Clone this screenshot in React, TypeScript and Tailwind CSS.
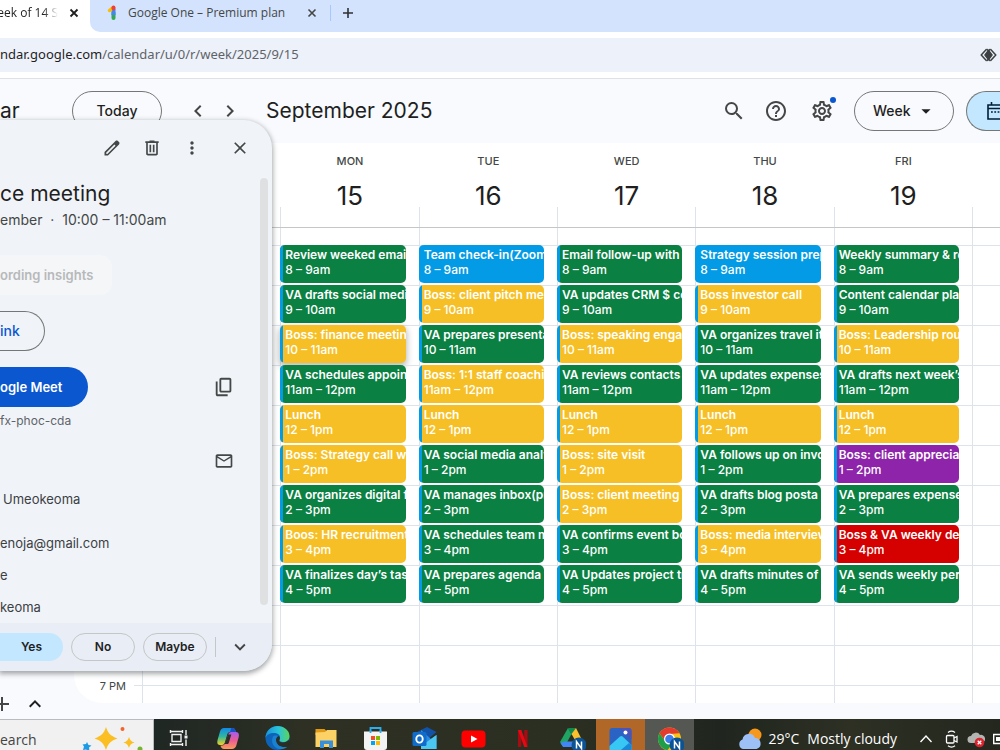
import type { ReactNode } from "react";
import {
  MdAdd,
  MdArrowDropDown,
  MdChevronLeft,
  MdChevronRight,
  MdClose,
  MdExpandLess,
  MdExpandMore,
  MdHelpOutline,
  MdMoreVert,
  MdOutlineSettings,
  MdSearch,
} from "react-icons/md";

type Tone = "green" | "yellow" | "blue" | "purple" | "red";
type CalendarEvent = { title: string; tone: Tone; open?: boolean };

const toneClass: Record<Tone, string> = {
  green: "bg-[#0b8043]",
  yellow: "bg-[#f6bf26]",
  blue: "bg-[#039be5]",
  purple: "bg-[#8e24aa]",
  red: "bg-[#d50000]",
};

const hours = [
  "8 – 9am",
  "9 – 10am",
  "10 – 11am",
  "11am – 12pm",
  "12 – 1pm",
  "1 – 2pm",
  "2 – 3pm",
  "3 – 4pm",
  "4 – 5pm",
];

const g = (title: string): CalendarEvent => ({ title, tone: "green" });
const y = (title: string): CalendarEvent => ({ title, tone: "yellow" });
const b = (title: string): CalendarEvent => ({ title, tone: "blue" });

const days: { name: string; date: string; events: CalendarEvent[] }[] = [
  { name: "", date: "", events: [] },
  {
    name: "MON",
    date: "15",
    events: [
      g("Review weeked email"),
      g("VA drafts social medi"),
      { title: "Boss: finance meetin", tone: "yellow", open: true },
      g("VA schedules appoin"),
      y("Lunch"),
      y("Boss: Strategy call wi"),
      g("VA organizes digital f"),
      y("Boos: HR recruitment"),
      g("VA finalizes day’s tas"),
    ],
  },
  {
    name: "TUE",
    date: "16",
    events: [
      b("Team check-in(Zoom"),
      y("Boss: client pitch me"),
      g("VA prepares presenta"),
      y("Boss: 1:1 staff coachi"),
      y("Lunch"),
      g("VA social media analy"),
      g("VA manages inbox(pr"),
      g("VA schedules team m"),
      g("VA prepares agenda f"),
    ],
  },
  {
    name: "WED",
    date: "17",
    events: [
      g("Email follow-up with c"),
      g("VA updates CRM $ co"),
      y("Boss: speaking engag"),
      g("VA reviews contacts"),
      y("Lunch"),
      y("Boss: site visit"),
      y("Boss: client meeting"),
      g("VA confirms event bo"),
      g("VA Updates project tr"),
    ],
  },
  {
    name: "THU",
    date: "18",
    events: [
      b("Strategy session prep"),
      y("Boss investor call"),
      g("VA organizes travel it"),
      g("VA updates expenses"),
      y("Lunch"),
      g("VA follows up on invo"),
      g("VA drafts blog posta"),
      y("Boss: media interview"),
      g("VA drafts minutes of"),
    ],
  },
  {
    name: "FRI",
    date: "19",
    events: [
      g("Weekly summary & re"),
      g("Content calendar plan"),
      y("Boss: Leadership roun"),
      g("VA drafts next week’s"),
      y("Lunch"),
      { title: "Boss: client apprecia", tone: "purple" },
      g("VA prepares expense"),
      { title: "Boss & VA weekly del", tone: "red" },
      g("VA sends weekly perf"),
    ],
  },
  { name: "", date: "", events: [] },
];

const columns = "grid grid-cols-[68px_repeat(6,minmax(0,1fr))_28px]";

function IconButton({ label, children, className = "w-10" }: { label: string; children: ReactNode; className?: string }) {
  return (
    <button aria-label={label} className={`relative flex h-10 shrink-0 items-center justify-center text-[#444746] ${className}`}>
      {children}
    </button>
  );
}

function Symbol({ d, size }: { d: string; size: number }) {
  return (
    <svg width={size} height={size} viewBox="0 -960 960 960" fill="currentColor">
      <path d={d} />
    </svg>
  );
}

function BrowserChrome() {
  return (
    <header className="shrink-0 bg-white font-['Open_Sans','Noto_Sans',sans-serif]">
      <div className="flex h-8">
        <div className="flex w-[90px] shrink-0 items-center pb-[6px]">
          <div className="flex w-[58px] justify-end overflow-hidden whitespace-nowrap text-xs text-[#1f1f1f] [mask-image:linear-gradient(to_right,black_75%,transparent)]">
            Week of 14 S
          </div>
          <button aria-label="Close tab" className="ml-2 text-[#1f1f1f]">
            <svg width="16" height="16" viewBox="0 0 16 16" stroke="currentColor" strokeWidth="1.8">
              <path d="M4.5 4.5l7 7M11.5 4.5l-7 7" />
            </svg>
          </button>
        </div>
        <div className="flex flex-1 items-center rounded-bl-[10px] bg-[#d3e3fd] pb-[6px] pl-[14px]">
          <svg width="16" height="16" viewBox="0 0 16 16" fill="none" strokeLinecap="round" strokeWidth="4">
            <path d="M9.5 8v5" stroke="#34a853" />
            <path d="M9.5 4v6" stroke="#4285f4" strokeLinecap="butt" />
            <path d="M5.5 5.5L8.5 3" stroke="#fbbc04" strokeWidth="3.5" />
            <path d="M9.5 2.5v1" stroke="#ea4335" />
          </svg>
          <span className="ml-2 w-44 text-xs text-[#444746]">Google One – Premium plan</span>
          <button aria-label="Close tab" className="text-[#444746]">
            <svg width="16" height="16" viewBox="0 0 16 16" stroke="currentColor" strokeWidth="1.6">
              <path d="M4.5 4.5l7 7M11.5 4.5l-7 7" />
            </svg>
          </button>
          <span className="ml-[10px] h-4 w-px bg-[#a8c7fa]" />
          <button aria-label="New tab" className="ml-[9px] text-[#303134]">
            <svg width="16" height="16" viewBox="0 0 16 16" stroke="currentColor" strokeWidth="1.6">
              <path d="M8 3v10M3 8h10" />
            </svg>
          </button>
        </div>
      </div>
      <div className="border-b border-[#dfe1e5] py-[6px]">
        <div className="flex h-[34px] items-center justify-between bg-[#edf1fa] pr-[3px] font-['Noto_Sans',sans-serif] text-[13px] text-[#5f6368]">
          <span>
            <span className="text-[#1f1f1f]">ndar.google.com</span>/calendar/u/0/r/week/2025/9/15
          </span>
          <svg width="17" height="14" viewBox="0 0 17 14" fill="none" stroke="#3c4043" strokeWidth="1.5" strokeLinejoin="round">
            <path d="M6.5 1.2L1.2 7l5.3 5.8M10.5 1.2L15.8 7l-5.3 5.8" />
            <path d="M8.5 2.5L12 7l-3.5 4.5L5 7z" fill="#3c4043" />
            <path d="M6.5 1.2l2 1.5 2-1.5M6.5 12.8l2-1.5 2 1.5" />
          </svg>
        </div>
      </div>
    </header>
  );
}

function CalendarHeader() {
  return (
    <div className="flex h-16 shrink-0 items-center text-[#1f1f1f]">
      <span className="w-[72px] shrink-0 text-[21px]">ar</span>
      <button className="h-10 w-[90px] shrink-0 rounded-full border border-[#747775] text-sm font-medium">Today</button>
      <div className="ml-5 flex">
        <IconButton label="Previous week" className="w-8"><MdChevronLeft size={24} /></IconButton>
        <IconButton label="Next week" className="w-8"><MdChevronRight size={24} /></IconButton>
      </div>
      <h1 className="ml-5 text-[21px]">September 2025</h1>
      <div className="ml-auto flex items-center">
        <IconButton label="Search"><MdSearch size={24} /></IconButton>
        <span className="ml-[2px] flex">
          <IconButton label="Support"><MdHelpOutline size={24} /></IconButton>
        </span>
        <span className="ml-[6px] flex">
          <IconButton label="Settings">
            <MdOutlineSettings size={24} />
            <span className="absolute right-[6px] top-[6px] size-[6px] rounded-full bg-[#0b57d0]" />
          </IconButton>
        </span>
        <button className="ml-3 flex h-10 w-[100px] items-center justify-between rounded-full border border-[#747775] pl-[18px] pr-4 text-sm font-medium">
          Week
          <MdArrowDropDown size={22} />
        </button>
        <button aria-label="Calendar view" className="ml-3 flex h-10 w-[34px] items-center overflow-hidden rounded-l-full border border-r-0 border-[#747775] bg-[#c2e7ff] pl-5 text-[#001d35]">
          <svg className="shrink-0" width="20" height="20" viewBox="0 0 20 20" fill="none" stroke="currentColor" strokeWidth="1.6">
            <path d="M1 4h18v14H1zM1 7.5h18M4.5 1v3M15.5 1v3" />
            <path d="M4 11h13" strokeDasharray="1.8 1.5" />
          </svg>
        </button>
      </div>
    </div>
  );
}

function EventBlock({ event, time }: { event: CalendarEvent; time: string }) {
  return (
    <button
      className={`-ml-px -mt-px mr-[13px] flex h-[38px] overflow-hidden rounded-[5px] text-left text-xs leading-[15px] text-white ${toneClass[event.tone]} ${event.open ? "shadow-[0_3px_6px_1px_rgba(60,64,67,0.35)]" : ""}`}
    >
      <span className="h-full w-[3px] shrink-0 bg-[#039be5]" />
      <span className="min-w-0 flex-1 overflow-hidden whitespace-nowrap pl-[2px] pt-[2px]">
        <span className="block font-semibold">{event.title}</span>
        <span className="block font-medium">{time}</span>
      </span>
    </button>
  );
}

function WeekGrid() {
  return (
    <section className="mb-4 flex min-w-0 flex-1 flex-col overflow-hidden rounded-bl-[28px] bg-white">
      <div className={`${columns} h-[85px] shrink-0 border-b border-[#c4c7c5]`}>
        <span />
        {days.map((day, i) => (
          <div key={i} className="flex flex-col items-center pt-[10px]">
            <span className="h-4 pl-px text-[11px] font-medium leading-4 text-[#444746]">{day.name}</span>
            <span className="mt-[9px] h-9 pl-px text-[26px] leading-9 text-[#1f1f1f]">{day.date}</span>
            <span className="-mt-[7px] h-5 w-full border-l border-[#dde3ea]" />
          </div>
        ))}
      </div>
      <div className={`${columns} min-h-0 flex-1 overflow-hidden`}>
        <div className="flex flex-col">
          <div className="h-[17px] shrink-0" />
          {Array.from({ length: 12 }, (_, row) => (
            <div key={row} className="flex h-10 shrink-0 justify-end gap-2">
              <span className="-mt-[7px] text-[11px] leading-4 text-[#444746]">
                {row === 11 ? "7 PM" : ""}
              </span>
              <span className="w-2 border-t border-[#dde3ea]" />
            </div>
          ))}
        </div>
        {days.map((day, i) => (
          <div key={i} className="flex min-w-0 flex-col border-l border-[#dde3ea]">
            <div className="h-[17px] shrink-0" />
            {Array.from({ length: 12 }, (_, row) => (
              <div key={row} className="grid h-10 shrink-0 grid-cols-[minmax(0,1fr)] content-start border-t border-[#dde3ea]">
                {day.events[row] && <EventBlock event={day.events[row]} time={hours[row]} />}
              </div>
            ))}
          </div>
        ))}
      </div>
    </section>
  );
}

function EventDetails() {
  return (
    <aside className="absolute left-0 top-[120px] w-[272px] overflow-hidden rounded-r-[28px] bg-[#f0f4f9] text-sm leading-5 text-[#1f1f1f] shadow-[0_2px_5px_1px_rgba(60,64,67,0.45)]">
      <div className="flex h-14 justify-end pr-3 pt-2">
        <IconButton label="Edit event">
          <svg width="20" height="20" viewBox="0 0 24 24" fill="currentColor">
            <path d="M20.41 4.94l-1.35-1.35c-.78-.78-2.05-.78-2.83 0L3 16.82V21h4.18L20.41 7.77c.79-.78.79-2.05 0-2.83zm-14 14.12L5 19v-1.36l9.82-9.82 1.41 1.41-9.82 9.83z" />
          </svg>
        </IconButton>
        <IconButton label="Delete event">
          <Symbol size={20} d="M280-120q-33 0-56.5-23.5T200-200v-520h-40v-80h200v-40h240v40h200v80h-40v520q0 33-23.5 56.5T680-120H280Zm400-600H280v520h400v-520ZM360-280h80v-360h-80v360Zm160 0h80v-360h-80v360Z" />
        </IconButton>
        <IconButton label="Options"><MdMoreVert size={20} /></IconButton>
        <span className="ml-2 flex">
          <IconButton label="Close"><MdClose size={20} /></IconButton>
        </span>
      </div>
      <div className="flex justify-between pr-1">
        <div className="flex min-w-0 flex-1 flex-col items-start pb-[6px] pt-1">
          <h2 className="text-[21px] leading-7">ce meeting</h2>
          <p className="mt-[2px] text-[#444746]">ember &nbsp;·&nbsp; 10:00 – 11:00am</p>
          <button className="mt-[25px] h-10 w-28 rounded-r-xl bg-[#f5f6f7] text-left text-[13px] font-semibold text-[#b7b9bb]">ording insights</button>
          <button className="mt-4 h-10 w-[45px] rounded-r-full border border-l-0 border-[#747775] text-left font-medium text-[#0b57d0]">ink</button>
          <div className="mt-4 flex w-full items-center justify-between pr-4">
            <button className="h-10 w-[88px] rounded-r-full bg-[#0b57d0] text-left text-[13px] font-semibold text-white">ogle Meet</button>
            <IconButton label="Copy joining info">
              <Symbol size={22} d="M360-240q-33 0-56.5-23.5T280-320v-480q0-33 23.5-56.5T360-880h360q33 0 56.5 23.5T800-800v480q0 33-23.5 56.5T720-240H360Zm0-80h360v-480H360v480ZM200-80q-33 0-56.5-23.5T120-160v-560h80v560h440v80H200Z" />
            </IconButton>
          </div>
          <p className="mt-[6px] text-xs leading-4 text-[#5f6368]">fx-phoc-cda</p>
          <div className="mt-3 flex w-full justify-end pr-4">
            <IconButton label="Email guests">
              <Symbol size={20} d="M160-160q-33 0-56.5-23.5T80-240v-480q0-33 23.5-56.5T160-800h640q33 0 56.5 23.5T880-720v480q0 33-23.5 56.5T800-160H160Zm320-280L160-640v400h640v-400L480-440Zm0-80 320-200H160l320 200Z" />
            </IconButton>
          </div>
          <div className="mt-2 text-[13px] text-[#3c4043]">
            <p className="pl-[3px]">Umeokeoma</p>
            <p className="mt-6">enoja@gmail.com</p>
            <p className="mt-3">e</p>
            <p className="mt-3">keoma</p>
          </div>
        </div>
        <div className="mb-[18px] mt-[2px] w-2 rounded-full bg-[#dfe0e2]" />
      </div>
      <div className="flex h-12 items-center bg-[#e8edf6] text-xs font-semibold">
        <button className="h-7 w-[63px] rounded-r-full bg-[#c2e7ff]">Yes</button>
        <button className="ml-2 h-7 w-16 rounded-full border border-[#c4c7c5]">No</button>
        <button className="ml-2 h-7 w-16 rounded-full border border-[#c4c7c5]">Maybe</button>
        <span className="ml-2 h-5 w-px bg-[#c4c7c5]" />
        <span className="ml-1 flex">
          <IconButton label="More RSVP options"><MdExpandMore size={22} /></IconButton>
        </span>
      </div>
    </aside>
  );
}

function NBadge() {
  return (
    <g>
      <circle cx="21" cy="20" r="7.5" fill="#0b5394" />
      <path d="M18.5 23.5v-7l5 7v-7" fill="none" stroke="#fff" strokeWidth="1.5" />
    </g>
  );
}

const apps: { name: string; tile?: string; icon: ReactNode }[] = [
  {
    name: "Task view",
    icon: (
      <g fill="none" stroke="#f1f1f1" strokeWidth="1.4">
        <path d="M4 6.5h13M4 19.5h13M6 9.500h9v7H6zM4.500 5v3M16.500 5v3M4.500 18v3M16.500 18v3" />
        <path d="M20 5v5M20 14.500V21" />
        <path d="M20 10.500v3" strokeWidth="3" />
      </g>
    ),
  },
  {
    name: "Copilot",
    icon: (
      <g>
        <defs>
          <linearGradient id="cpA" x1="0" y1="0" x2="0" y2="1"><stop stopColor="#1389e8" /><stop offset=".5" stopColor="#2fb7a0" /><stop offset="1" stopColor="#f4d020" /></linearGradient>
          <linearGradient id="cpB" x1="0" y1="0" x2="0" y2="1"><stop stopColor="#a45cf0" /><stop offset=".5" stopColor="#ec5c94" /><stop offset="1" stopColor="#fb9a5b" /></linearGradient>
        </defs>
        <path d="M9 3h8.500c2 0 2.700 1.500 3.300 4H15c-1.500 0-2.300 1-2.800 2.500L10 17c-.5 2-1.500 3-3 3H5c-3 0-3-3-2.300-5.500L5 6.500C5.700 4.300 7 3 9 3z" fill="url(#cpA)" />
        <path d="M17.500 3c2 0 2.700 1.500 3.300 4H15l1.200-4z" fill="#1d4fc4" />
        <path d="M17 24H9c-2 0-3-1.200-3.600-3.500H7c2 0 3-1.500 3.500-3L13 10c.6-2 1.500-3 3.300-3H21c3 0 3.300 3 2.600 5.500l-2.300 8C20.700 22.700 19 24 17 24z" fill="url(#cpB)" />
        <path d="M10.300 17.500L13 9.500h3.300l-2.400 8c-.3 1-.8 1.500-1.800 1.500H9.500z" fill="#2b2e22" />
      </g>
    ),
  },
  {
    name: "Edge",
    icon: (
      <g>
        <defs>
          <linearGradient id="edA"><stop stopColor="#1693dc" /><stop offset=".55" stopColor="#2bc3d8" /><stop offset="1" stopColor="#5ad65a" /></linearGradient>
        </defs>
        <circle cx="13.500" cy="13" r="12" fill="#0d63b8" />
        <path d="M1.500 13C1.500 6 7 1 13.500 1s12 4.500 12 10c0 4-3 6-6.500 6-2.700 0-4-1.200-3.500-2.300C17.500 10.500 14 8 10 8c-4.500 0-7.500 2-8.500 5z" fill="url(#edA)" />
        <path d="M15.500 14.700c-1 1.800 1 2.700 3.500 2.700 2.500 0 4.500-1 5.500-2.400L27 18l-5 4.500c-6 0-10.500-3-10-8 .2-1.600 1-2.600 2-3.500 1.700.6 2.500 2.200 1.500 3.700z" fill="#2b2e22" />
        <path d="M9 11.500c-2.500 5 0 11.500 6.500 12.500 3 .4 6-.6 8-2.300-6 1.300-11.500-1.500-11.500-7 0-1.700 1-3 2-3.700-1.500-.8-4-.5-5 .5z" fill="#1a80d0" />
      </g>
    ),
  },
  {
    name: "File Explorer",
    icon: (
      <g>
        <path d="M2.500 4h9l2 2H23v4H2.500z" fill="#e39a13" />
        <path d="M2.500 7.500L12 7l2-2h9.500v17h-21z" fill="#fcd166" />
        <path d="M7 23v-7.500h13V23h-4v-4h-5v4z" fill="#3a8fd9" />
      </g>
    ),
  },
  {
    name: "Store",
    icon: (
      <g>
        <path d="M8.500 8V3h10v5" fill="none" stroke="#29aef0" strokeWidth="1.8" />
        <path d="M2 6.500h23V22a3 3 0 01-3 3H5a3 3 0 01-3-3z" fill="#f3f3f3" />
        <path d="M9 11h4v4H9z" fill="#f25022" /><path d="M14 11h4v4h-4z" fill="#7fba00" />
        <path d="M9 16h4v4H9z" fill="#00a4ef" /><path d="M14 16h4v4h-4z" fill="#ffb900" />
        <path d="M8.500 8V5.500M18.500 8V5.500" stroke="#29aef0" strokeWidth="1.8" />
      </g>
    ),
  },
  {
    name: "Outlook",
    icon: (
      <g>
        <path d="M6 7l10-5 9.500 5-9.500 8z" fill="#1253a8" />
        <path d="M10 5l10 9 5.500-4V24H10z" fill="#2a8ae0" />
        <path d="M25.500 10L10 21v3h15.500z" fill="#4bc8f2" />
        <rect x="1.500" y="7" width="14" height="14" rx="1.500" fill="#0f6ccb" />
        <ellipse cx="8.500" cy="14" rx="3.200" ry="3.600" fill="none" stroke="#fff" strokeWidth="1.9" />
      </g>
    ),
  },
  {
    name: "YouTube",
    icon: (
      <g>
        <rect x="1.500" y="5.500" width="24" height="17" rx="4" fill="#f00" />
        <path d="M11 10.500v7l6.500-3.500z" fill="#fff" />
      </g>
    ),
  },
  {
    name: "Netflix",
    icon: (
      <g>
        <path d="M9 5h3.300v17H9zM15.200 5h3.300v17h-3.300z" fill="#a90b13" />
        <path d="M9 5h3.300l6.200 17h-3.300z" fill="#e50914" />
      </g>
    ),
  },
  {
    name: "Drive",
    icon: (
      <g>
        <path d="M10 3l3.500 6L7 21H4.500L2 17z" fill="#1fa463" />
        <path d="M10 3h8l-4.200 7z" fill="#0f8a4f" />
        <path d="M13.500 9L18 3l6 12h-7z" fill="#fbc02d" />
        <path d="M2.500 18l2.500 4h14v-5.500H6z" fill="#4285f4" />
        <NBadge />
      </g>
    ),
  },
  {
    name: "Photos",
    tile: "bg-[#b06728]",
    icon: (
      <g>
        <rect x="2.500" y="3" width="22" height="22" rx="3" fill="#2a63c4" />
        <path d="M12 3h9.500a3 3 0 013 3v8z" fill="#4b54b8" />
        <path d="M2.500 21L13 11.500a2 2 0 012.600 0l8.900 8.500v5h-22z" fill="#38c6f4" />
        <path d="M14 25l8-7 2.500 2v5z" fill="#1787d8" />
        <circle cx="18.500" cy="7.500" r="2" fill="#fff" />
      </g>
    ),
  },
  {
    name: "Chrome",
    tile: "bg-[#555752]",
    icon: (
      <g>
        <circle cx="13.500" cy="14" r="11.500" fill="#fbc116" />
        <path d="M3.500 8.200A11.500 11.500 0 0123.500 8.300L13.500 9 9 16z" fill="#e33b2e" />
        <path d="M3.500 8.200a11.500 11.500 0 008 17L16 19l-7-3z" fill="#1e9e4a" />
        <circle cx="13.500" cy="14" r="5.500" fill="#fff" />
        <circle cx="13.500" cy="14" r="4.300" fill="#3b7ded" />
        <NBadge />
      </g>
    ),
  },
];

function Taskbar() {
  return (
    <footer className="h-[31px] shrink-0 overflow-hidden bg-[linear-gradient(90deg,#1f2724_15%,#2d3023_30%,#2b2f22_58%,#20261f_72%,#2d3023_85%,#23271e)] font-['Open_Sans','Noto_Sans',sans-serif] text-white">
      <div className="flex h-10 items-center">
        <div className="flex h-10 w-[154px] shrink-0 items-center justify-between border-r border-t border-[#b9bbbc] bg-[#f1f1f1] text-sm text-[#444]">
          earch
          <svg className="mr-2" width="64" height="40" viewBox="0 0 64 40">
            <path d="M25 7c2 6 4 8.500 11.500 11.500C29 21 27 24 25 30c-2-6-4-9-11.500-11.500C21 15.500 23 13 25 7z" fill="#fbbf24" />
            <path d="M48 17c1 3 2 4.500 5.500 5.500C50 23.500 49 25 48 28c-1-3-2-4.500-5.500-5.500C46 21.500 47 20 48 17z" fill="#fbbf24" />
            <path d="M6 22l1.500 3 3 .5-2.500 2 .5 4-3.500-2L2 30l1-3.500-1.500-2 3.500-.5z" fill="#1a9be8" />
            <circle cx="41.500" cy="9" r="2" fill="#f4632a" />
            <circle cx="59" cy="29" r="2.500" fill="#74b72e" />
          </svg>
        </div>
        <nav className="flex shrink-0 pl-px">
          {apps.map((app) => (
            <button key={app.name} aria-label={app.name} className={`flex h-10 w-[49px] items-center justify-center ${app.tile ?? ""}`}>
              <svg width="28" height="28" viewBox="0 0 28 28">{app.icon}</svg>
            </button>
          ))}
        </nav>
        <div className="ml-auto flex items-center">
          <button className="flex items-center text-sm">
            <svg width="26" height="24" viewBox="0 0 26 24">
              <circle cx="18" cy="8" r="6.500" fill="#f7981d" />
              <path d="M6 22a5 5 0 01-.5-9.500A6.500 6.500 0 0118 11a5.600 5.600 0 011.500 11z" fill="#9dc0f7" />
            </svg>
            <span className="ml-[5px]">29°C</span>
            <span className="ml-2">Mostly cloudy</span>
          </button>
          <button aria-label="Show hidden icons" className="ml-[22px]">
            <svg width="14" height="16" viewBox="0 0 14 16" fill="none" stroke="#fff" strokeWidth="1.4"><path d="M1.500 11L7 5l5.500 6" /></svg>
          </button>
          <svg className="ml-3" width="14" height="18" viewBox="0 0 14 18" fill="none" stroke="#fff" strokeWidth="1.3">
            <rect x="1.500" y="5.500" width="7.500" height="7.500" rx="1" />
            <path d="M9 8l3-1.500v5.500L9 10.500M3 2.500C5 1 8 1 10 2.500M3 15.800c2 1.500 5 1.500 7 0" />
          </svg>
          <svg className="ml-2" width="18" height="18" viewBox="0 0 18 18">
            <path d="M4 13a3.500 3.500 0 010-7 5 5 0 019-1 4 4 0 012 8z" fill="#b3b5b3" />
            <circle cx="12.500" cy="12.500" r="4.800" fill="#d9232e" />
            <path d="M10.700 10.700l3.600 3.600M14.300 10.700l-3.600 3.600" stroke="#fff" strokeWidth="1.3" />
          </svg>
          <svg className="ml-2" width="7" height="12" viewBox="0 0 7 12">
            <path d="M7 1.500H.7v9H7" fill="none" stroke="#fff" strokeWidth="1.4" />
            <path d="M3 4h4v4H3z" fill="#fff" />
          </svg>
        </div>
      </div>
    </footer>
  );
}

export default function App() {
  return (
    <div className="relative flex h-screen flex-col overflow-hidden bg-[#f8fafd] font-[Inter,sans-serif]">
      <BrowserChrome />
      <CalendarHeader />
      <main className="flex min-h-0 flex-1">
        <div className="flex w-[74px] shrink-0 items-end gap-[9px] overflow-hidden pb-[3px] text-[#444746]">
          <button aria-label="Add other calendars" className="flex w-[14px] justify-end">
            <MdAdd size={24} className="shrink-0" />
          </button>
          <button aria-label="Collapse calendars" className="text-[#1f1f1f]">
            <MdExpandLess size={24} />
          </button>
        </div>
        <WeekGrid />
      </main>
      <EventDetails />
      <Taskbar />
    </div>
  );
}
